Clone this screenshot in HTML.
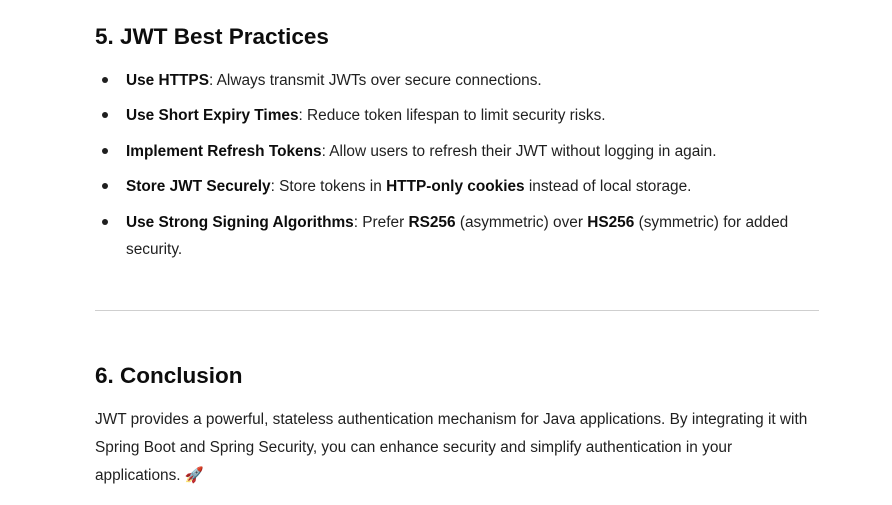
<!DOCTYPE html>
<html><head><style>
body{margin:0;background:#fff;width:892px;height:505px;overflow:hidden;font-family:"Liberation Sans",sans-serif;color:#1f1f1f;position:relative}
.a{position:absolute;white-space:nowrap;font-size:15.4px;line-height:20px}
h2{position:absolute;margin:0;font-size:22.5px;font-weight:bold;color:#0d0d0d;line-height:30px;white-space:nowrap}
.b{position:absolute;left:102px;width:6px;height:6px;border-radius:50%;background:#1f1f1f}
b{font-weight:bold;color:#0d0d0d}
hr{position:absolute;left:95px;top:310px;width:724px;margin:0;border:0;border-top:1px solid #cfcfcf}
</style></head><body>
<h2 style="left:95px;top:22px">5. JWT Best Practices</h2>
<div class="b" style="top:77px"></div><div class="a" style="left:126px;top:71px"><b>Use HTTPS</b>: Always transmit JWTs over secure connections.</div>
<div class="b" style="top:112px"></div><div class="a" style="left:126px;top:106px"><b>Use Short Expiry Times</b>: Reduce token lifespan to limit security risks.</div>
<div class="b" style="top:148px"></div><div class="a" style="left:126px;top:142px"><b>Implement Refresh Tokens</b>: Allow users to refresh their JWT without logging in again.</div>
<div class="b" style="top:183px"></div><div class="a" style="left:126px;top:177px"><b>Store JWT Securely</b>: Store tokens in <b>HTTP-only cookies</b> instead of local storage.</div>
<div class="b" style="top:219px"></div><div class="a" style="left:126px;top:213px"><b>Use Strong Signing Algorithms</b>: Prefer <b>RS256</b> (asymmetric) over <b>HS256</b> (symmetric) for added</div>
<div class="a" style="left:126px;top:240px">security.</div>
<hr>
<h2 style="left:95px;top:361px">6. Conclusion</h2>
<div class="a" style="left:95px;top:410px">JWT provides a powerful, stateless authentication mechanism for Java applications. By integrating it with</div>
<div class="a" style="left:95px;top:438px">Spring Boot and Spring Security, you can enhance security and simplify authentication in your</div>
<div class="a" style="left:95px;top:466px">applications. <span style="color:#e0245e">🚀</span></div>
</body></html>
